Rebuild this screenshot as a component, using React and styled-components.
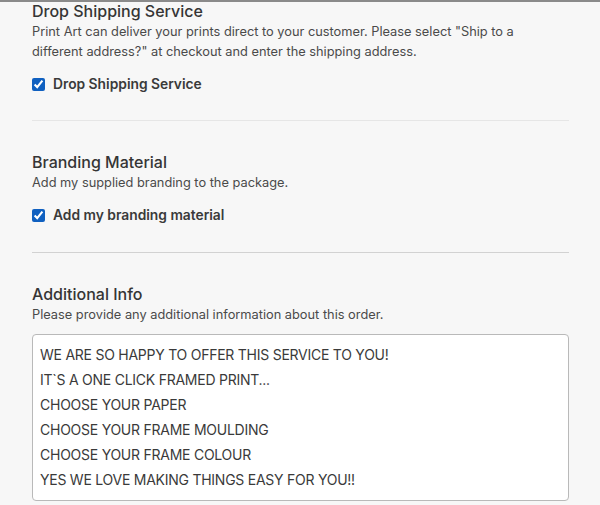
import { useEffect, useRef } from "react";
import styled, { createGlobalStyle } from "styled-components";

const GlobalStyle = createGlobalStyle`
  html, body {
    margin: 0;
    padding: 0;
    background: #f7f7f7;
  }
  body {
    font-family: Inter, "Noto Sans", sans-serif;
    color: #333;
  }
`;

const Page = styled.div`
  border-top: 2px solid #8a8a8a;
  padding: 0 31px 0 32px;
  height: 503px;
  overflow: hidden;
`;

const Section = styled.section`
  padding: ${(p) => (p.$first ? "0" : "30px")} 0 ${(p) => p.$bottom || "0"};
  border-bottom: ${(p) => (p.$line ? `1px solid ${p.$line}` : "none")};
`;

const Title = styled.h3`
  margin: ${(p) => (p.$first ? "-2px" : "0")} 0 0;
  font-size: 16px;
  line-height: 22px;
  font-weight: 500;
  color: #353535;
`;

const Help = styled.p`
  margin: 0;
  max-width: 525px;
  font-size: 12.8px;
  line-height: 20px;
  color: #4a4a4a;
`;

const CheckRow = styled.label`
  display: flex;
  align-items: center;
  gap: 8px;
  margin-top: 12px;
  font-size: 13.8px;
  line-height: 20px;
  font-weight: 600;
  color: #3a3a3a;
`;

const Box = styled.input`
  margin: 0;
  width: 13px;
  height: 13px;
  accent-color: #1060c0;
`;

const Notes = styled.textarea`
  display: block;
  box-sizing: border-box;
  width: 100%;
  height: 167px;
  margin-top: 9px;
  padding: 7px 7px;
  border: 1px solid #b9b9b9;
  border-radius: 4px;
  background: #fff;
  font-family: Inter, "Noto Sans", sans-serif;
  font-size: 14px;
  letter-spacing: -0.25px;
  line-height: 25px;
  color: #3a3a3a;
  caret-color: #333;
  resize: none;
  overflow: hidden;
  outline: none;
`;

const notes = [
  "WE ARE SO HAPPY TO OFFER THIS SERVICE TO YOU!",
  "IT`S A ONE CLICK FRAMED PRINT...",
  "CHOOSE YOUR PAPER",
  "CHOOSE YOUR FRAME MOULDING",
  "CHOOSE YOUR FRAME COLOUR",
  "YES WE LOVE MAKING THINGS EASY FOR YOU!!",
].join("\n");

export default function App() {
  const notesRef = useRef(null);

  useEffect(() => {
    const el = notesRef.current;
    if (!el) return;
    const at = notes.indexOf("CHOOSE YOUR PAPER");
    el.focus();
    el.setSelectionRange(at, at);
  }, []);

  return (
    <>
      <GlobalStyle />
      <Page>
        <Section $first $bottom="26px" $line="#e6e6e6">
          <Title $first>Drop Shipping Service</Title>
          <Help>
            Print Art can deliver your prints direct to your customer. Please
            select "Ship to a different address?" at checkout and enter the
            shipping address.
          </Help>
          <CheckRow>
            <Box type="checkbox" defaultChecked />
            Drop Shipping Service
          </CheckRow>
        </Section>
        <Section $bottom="27px" $line="#d2d2d2">
          <Title>Branding Material</Title>
          <Help>Add my supplied branding to the package.</Help>
          <CheckRow>
            <Box type="checkbox" defaultChecked />
            Add my branding material
          </CheckRow>
        </Section>
        <Section>
          <Title>Additional Info</Title>
          <Help>Please provide any additional information about this order.</Help>
          <Notes ref={notesRef} defaultValue={notes} />
        </Section>
      </Page>
    </>
  );
}
